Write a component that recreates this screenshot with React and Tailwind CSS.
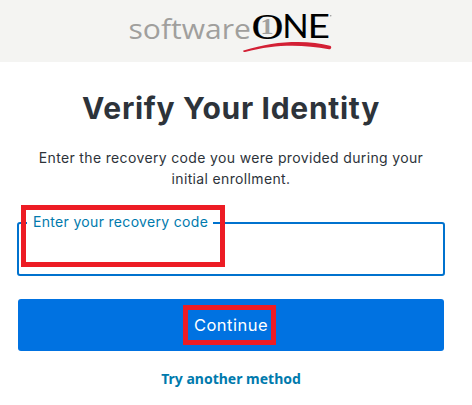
function Logo() {
  return (
    <svg width="220" height="62" viewBox="120 0 220 62" role="img" aria-label="softwareONE" className="ml-[120px] block">
      <text x="128.5" y="38.5" fontSize="27.5" textLength="122.5" lengthAdjust="spacingAndGlyphs" fill="#a09f9d" className="font-['Open_Sans',sans-serif]">software</text>
      <text x="251.5" y="38.5" fontSize="36" textLength="32" lengthAdjust="spacingAndGlyphs" fill="#000" stroke="#000" strokeWidth="0.2" className="font-['Liberation_Serif',serif]">O</text>
      <text x="260.5" y="34" fontSize="23" textLength="13" lengthAdjust="spacingAndGlyphs" fill="#a09f9d" className="font-['Liberation_Serif',serif] font-bold">1</text>
      <text x="282.3" y="38.3" fontSize="32.5" textLength="26.5" lengthAdjust="spacingAndGlyphs" fill="#000" className="font-['Lato',sans-serif]">N</text>
      <text x="307.6" y="38.3" fontSize="32.5" textLength="22.5" lengthAdjust="spacingAndGlyphs" fill="#000" className="font-['Lato',sans-serif]">E</text>
      <circle cx="330.7" cy="15.7" r="0.8" fill="#999" />
      <path d="M243.5 50.5C263 44.5 280 42 298 42C310 42 321 43.5 330 45.8C332 46.3 331.5 49.7 329 49.3C303 44.5 276 43.8 245 52C243.3 52.4 242.7 50.8 243.5 50.5Z" fill="#d32035" />
    </svg>
  );
}

export default function App() {
  return (
    <div className="h-[405px] w-[472px] overflow-hidden bg-white font-['Inter',sans-serif] text-[#2d333a]">
      <header className="h-[62px] bg-[#f4f4f2]">
        <Logo />
      </header>
      <main className="ml-[18px] flex w-[426px] flex-col items-center">
        <h1 className="mt-[26px] text-[30px] leading-10 font-bold tracking-[0.7px] whitespace-nowrap">Verify Your Identity</h1>
        <p className="mt-[19px] text-center text-[14px] leading-[21px] tracking-[0.35px] whitespace-nowrap">
          Enter the recovery code you were provided during your
          <br />
          initial enrollment.
        </p>
        <div className="relative mt-[33px] h-[54px] w-[428px] rounded-[3px] border-2 border-[#0072ce]">
          <label className="absolute -top-[13px] left-[8px] h-[22px] w-[186px] bg-white pl-[6px] text-[14px] leading-[22px] tracking-[0.32px] whitespace-nowrap text-[#007aad]">Enter your recovery code</label>
          <div className="absolute -top-[19px] left-[2px] h-[62px] w-[204px] border-5 border-[#ed1c24]" />
        </div>
        <button className="relative mt-[23px] h-[52px] w-full rounded-[3px] bg-[#0072e1] text-[16.5px] tracking-[0.5px] text-white">
          Continue
          <span className="absolute top-[6px] left-[165px] h-[40px] w-[93px] border-5 border-[#ed1c24]" />
        </button>
        <a className="mt-[18px] font-['Noto_Sans',sans-serif] text-[14px] leading-5 font-bold whitespace-nowrap text-[#007aad]">Try another method</a>
      </main>
    </div>
  );
}
